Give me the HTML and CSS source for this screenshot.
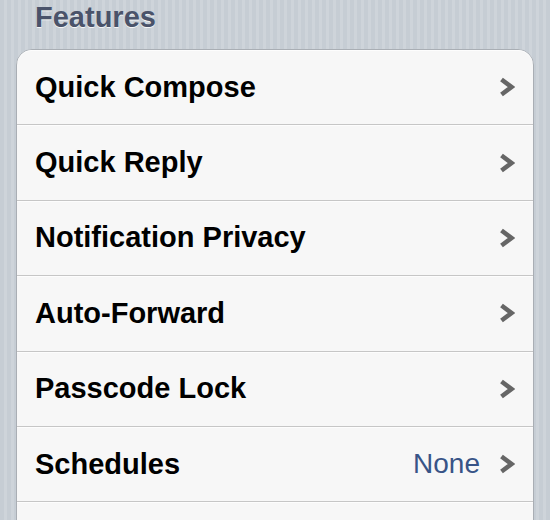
FILE: index.html
```html
<!DOCTYPE html>
<html lang="en">
<head>
  <meta charset="UTF-8" />
  <meta name="viewport" content="width=device-width, initial-scale=1.0" />
  <title>Features</title>
  <link rel="stylesheet" href="styles.css">
</head>
<body>

  <div class="page">
    <h2 class="group-title">Features</h2>

    <!-- Grouped table, one row per setting -->
    <ul class="group">
      <li class="row">
        <span class="label">Quick Compose</span>
        <svg class="chevron" viewBox="0 0 16 20"><polyline points="2.5,2.5 12.5,10 2.5,17.5" /></svg>
      </li>
      <li class="row">
        <span class="label">Quick Reply</span>
        <svg class="chevron" viewBox="0 0 16 20"><polyline points="2.5,2.5 12.5,10 2.5,17.5" /></svg>
      </li>
      <li class="row">
        <span class="label">Notification Privacy</span>
        <svg class="chevron" viewBox="0 0 16 20"><polyline points="2.5,2.5 12.5,10 2.5,17.5" /></svg>
      </li>
      <li class="row">
        <span class="label">Auto-Forward</span>
        <svg class="chevron" viewBox="0 0 16 20"><polyline points="2.5,2.5 12.5,10 2.5,17.5" /></svg>
      </li>
      <li class="row">
        <span class="label">Passcode Lock</span>
        <svg class="chevron" viewBox="0 0 16 20"><polyline points="2.5,2.5 12.5,10 2.5,17.5" /></svg>
      </li>
      <li class="row">
        <span class="label">Schedules</span>
        <span class="value">None</span>
        <svg class="chevron" viewBox="0 0 16 20"><polyline points="2.5,2.5 12.5,10 2.5,17.5" /></svg>
      </li>
      <li class="row row-last"></li>
    </ul>
  </div>

</body>
</html>
```

FILE: styles.css
```css
html, body {
  height: 520px;
  overflow: hidden;
}

body {
  margin: 0;
  padding: 0;
  font-family: "Liberation Sans", Arial, Helvetica, sans-serif;
  background: repeating-linear-gradient(to right, #c6cdd4 0, #c6cdd4 4px, #ced4da 4px, #ced4da 7px);
  color: #000;
}

.page {
  height: 520px;
  overflow: hidden;
  padding: 0 16px;
}

.group-title {
  margin: 0;
  padding: 0 0 0 19px;
  height: 49px;
  line-height: 34px;
  font-size: 29px;
  font-weight: bold;
  color: #4a536a;
  text-shadow: 0 1px 0 rgba(255, 255, 255, 0.8);
}

.group {
  list-style: none;
  margin: 0;
  padding: 0;
  background: #f7f7f7;
  border: 1px solid #a9aeb4;
  border-radius: 16px;
}

.row {
  display: flex;
  align-items: center;
  min-height: 74.4px;
  padding: 0 18px 0 18px;
  border-bottom: 1px solid #c6c6c6;
  box-shadow: inset 0 1px 0 #fdfdfd;
}

.row:first-child {
  border-radius: 15px 15px 0 0;
}

.row-last {
  min-height: 40px;
}

.label {
  flex: 1;
  font-size: 29px;
  font-weight: bold;
}

.value {
  font-size: 28px;
  color: #385487;
  margin-right: 19px;
}

.chevron {
  width: 16px;
  height: 20px;
  fill: none;
  stroke: #666;
  stroke-width: 4.6;
  stroke-linejoin: miter;
}
```
